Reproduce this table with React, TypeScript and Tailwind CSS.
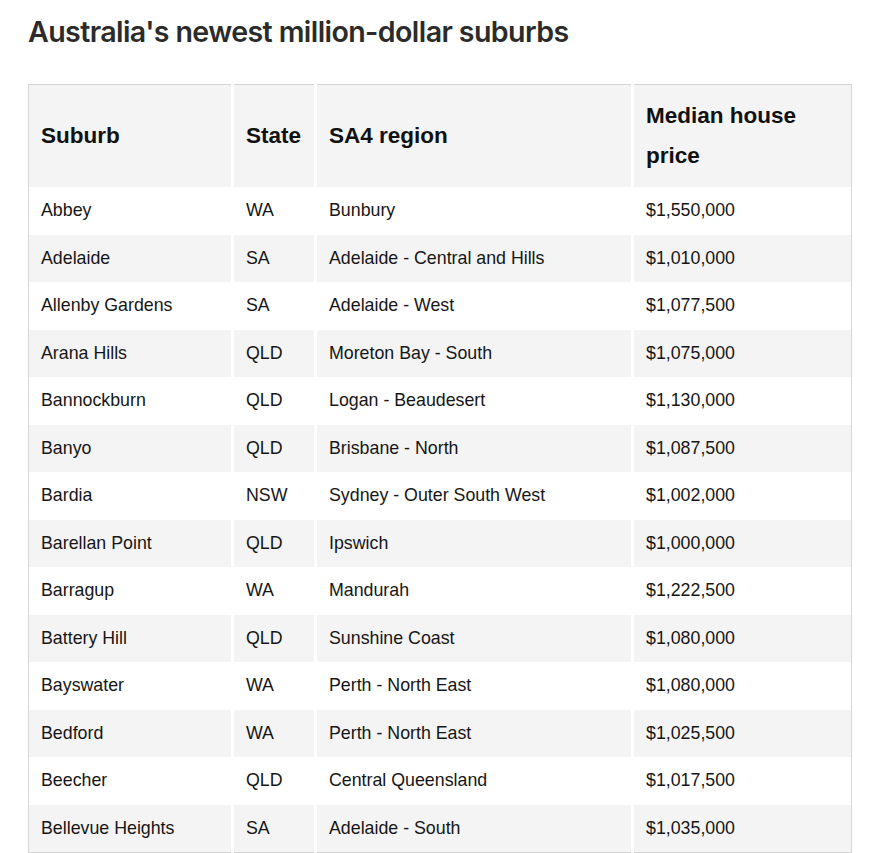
const rows: [string, string, string, string][] = [
  ['Abbey', 'WA', 'Bunbury', '$1,550,000'],
  ['Adelaide', 'SA', 'Adelaide - Central and Hills', '$1,010,000'],
  ['Allenby Gardens', 'SA', 'Adelaide - West', '$1,077,500'],
  ['Arana Hills', 'QLD', 'Moreton Bay - South', '$1,075,000'],
  ['Bannockburn', 'QLD', 'Logan - Beaudesert', '$1,130,000'],
  ['Banyo', 'QLD', 'Brisbane - North', '$1,087,500'],
  ['Bardia', 'NSW', 'Sydney - Outer South West', '$1,002,000'],
  ['Barellan Point', 'QLD', 'Ipswich', '$1,000,000'],
  ['Barragup', 'WA', 'Mandurah', '$1,222,500'],
  ['Battery Hill', 'QLD', 'Sunshine Coast', '$1,080,000'],
  ['Bayswater', 'WA', 'Perth - North East', '$1,080,000'],
  ['Bedford', 'WA', 'Perth - North East', '$1,025,500'],
  ['Beecher', 'QLD', 'Central Queensland', '$1,017,500'],
  ['Bellevue Heights', 'SA', 'Adelaide - South', '$1,035,000'],
]

const th = 'px-[12px] py-[11px] text-left align-middle text-[22.5px] leading-[40px] font-bold text-[#111]'
const td = 'px-[12px] py-[10px] text-[17.8px] leading-[27.5px] text-[#161616]'

export default function App() {
  return (
    <div className="min-h-screen bg-white pl-[28px] pr-[20px] pt-[14px] font-['Liberation_Sans',Arial,sans-serif]">
      <h2 className="font-['Inter',sans-serif] text-[28.6px] leading-[36px] font-semibold tracking-[-0.6px] text-[#2b2b2b]">
        Australia's newest million-dollar suburbs
      </h2>
      <table className="mt-[34px] w-[824px] table-fixed border-collapse border border-[#d6d6d6]">
        <colgroup>
          <col className="w-[204px]" />
          <col className="w-[83px]" />
          <col className="w-[317px]" />
          <col />
        </colgroup>
        <thead>
          <tr className="bg-[#f4f4f4]">
            <th className={`${th} border-r-[3px] border-white`}>Suburb</th>
            <th className={`${th} border-r-[3px] border-white`}>State</th>
            <th className={`${th} border-r-[3px] border-white`}>SA4 region</th>
            <th className={th}>Median house price</th>
          </tr>
        </thead>
        <tbody>
          {rows.map((r, i) => (
            <tr key={r[0]} className={i % 2 === 1 ? 'bg-[#f4f4f4]' : 'bg-white'}>
              <td className={`${td} border-r-[3px] border-white`}>{r[0]}</td>
              <td className={`${td} border-r-[3px] border-white`}>{r[1]}</td>
              <td className={`${td} border-r-[3px] border-white`}>{r[2]}</td>
              <td className={td}>{r[3]}</td>
            </tr>
          ))}
        </tbody>
      </table>
    </div>
  )
}
